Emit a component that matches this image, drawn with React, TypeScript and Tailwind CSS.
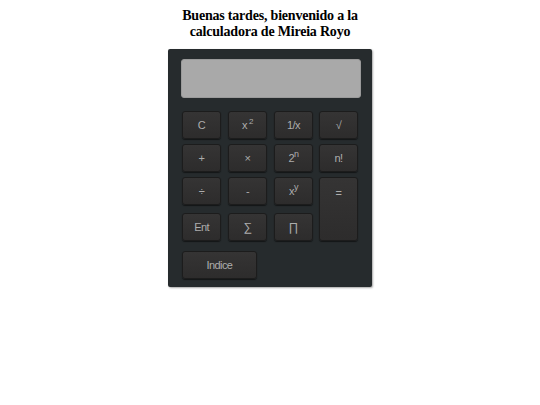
import React from "react";

const btn =
  "flex items-center justify-center w-[39px] h-[28px] rounded-[3px] border border-[#1c1c1c] bg-gradient-to-b from-[#353434] to-[#2d2c2c] text-[#adadad] text-[11px] tracking-[-0.6px] shadow-[0_1px_1px_rgba(0,0,0,0.5)]";

export default function App() {
  return (
    <div className="w-[540px] h-[405px] bg-white flex flex-col items-center" style={{ fontFamily: "'Liberation Sans', Arial, sans-serif" }}>
      <h1
        className="mt-[8px] text-center font-bold text-[14px] leading-[16px] tracking-[-0.2px] text-black"
        style={{ fontFamily: "'Liberation Serif', 'Times New Roman', serif" }}
      >
        Buenas tardes, bienvenido a la
        <br />
        calculadora de Mireia Royo
      </h1>
      <div className="mt-[9px] w-[204px] h-[238px] bg-[#262b2d] rounded-[2px] shadow-[1px_1px_2px_rgba(0,0,0,0.35)] pl-[13px] pr-[11px] pt-[10px]">
        <div className="h-[39px] w-[180px] bg-[#a9a9a9] rounded-[3px] border border-[#9a9a9a]" />
        <div className="mt-[13px] ml-[1px] grid grid-cols-[46px_46px_45px_39px] grid-rows-[33px_33px_36px_38px_28px]">
          <div className={btn}>C</div>
          <div className={btn}>
            x<sup className="text-[8px] ml-[2px] -top-[3px]">2</sup>
          </div>
          <div className={btn}>1/x</div>
          <div className={btn}>√</div>

          <div className={btn}>+</div>
          <div className={btn}>×</div>
          <div className={btn}>
            2<sup className="text-[9px] -top-[4px]">n</sup>
          </div>
          <div className={btn}>n!</div>

          <div className={btn}>÷</div>
          <div className={btn}>-</div>
          <div className={btn}>
            x<sup className="text-[9px] -top-[4px]">y</sup>
          </div>
          <div className={`${btn} row-span-2 !h-[64px] !items-start pt-[7px]`}>=</div>

          <div className={btn}>Ent</div>
          <div className={`${btn} text-[12px]`}>∑</div>
          <div className={`${btn} text-[12px]`}>∏</div>

          <div className={`${btn} col-span-2 !w-[75px]`}>Indice</div>
        </div>
      </div>
    </div>
  );
}
